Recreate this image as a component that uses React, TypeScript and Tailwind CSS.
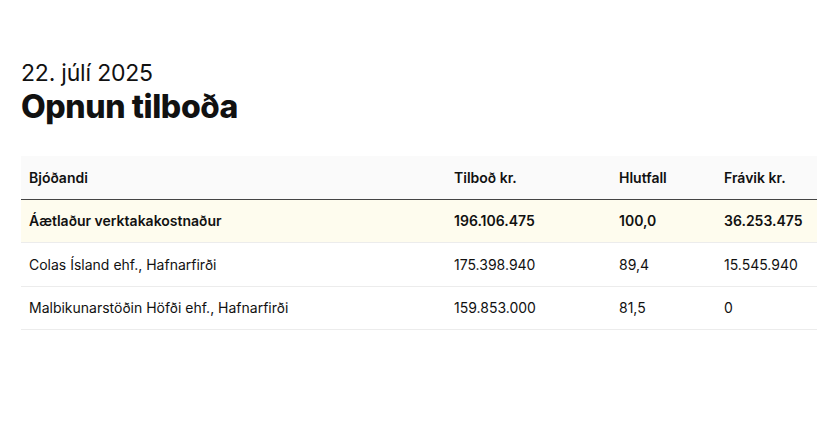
const rows = [
  { name: "Áætlaður verktakakostnaður", offer: "196.106.475", ratio: "100,0", diff: "36.253.475", estimate: true },
  { name: "Colas Ísland ehf., Hafnarfirði", offer: "175.398.940", ratio: "89,4", diff: "15.545.940", estimate: false },
  { name: "Malbikunarstöðin Höfði ehf., Hafnarfirði", offer: "159.853.000", ratio: "81,5", diff: "0", estimate: false },
];

export default function App() {
  return (
    <div className="min-h-[427px] w-[830px] bg-white pl-[21px] pr-[13px] pt-[58px] font-['Inter',sans-serif] text-[#111]">
      <p className="text-[23px] leading-[30px] tracking-[-0.2px]">22. júlí 2025</p>
      <h1 className="text-[32px] font-extrabold leading-[38px] tracking-[-0.4px]">Opnun tilboða</h1>

      <table className="mt-[30px] w-full border-collapse text-left text-[14px]">
        <thead>
          <tr className="h-[43px] border-b border-[#444] bg-[#fafafa]">
            <th className="w-[425px] px-2 font-semibold">Bjóðandi</th>
            <th className="w-[165px] px-2 font-semibold">Tilboð kr.</th>
            <th className="w-[105px] px-2 font-semibold">Hlutfall</th>
            <th className="px-2 font-semibold">Frávik kr.</th>
          </tr>
        </thead>
        <tbody>
          {rows.map((r) => (
            <tr
              key={r.name}
              className={
                r.estimate
                  ? "h-[43.5px] border-b border-[#ececec] bg-[#fefcee] font-semibold"
                  : "h-[43.5px] border-b border-[#ececec]"
              }
            >
              <td className="px-2">{r.name}</td>
              <td className="px-2">{r.offer}</td>
              <td className="px-2">{r.ratio}</td>
              <td className="px-2">{r.diff}</td>
            </tr>
          ))}
        </tbody>
      </table>
    </div>
  );
}
